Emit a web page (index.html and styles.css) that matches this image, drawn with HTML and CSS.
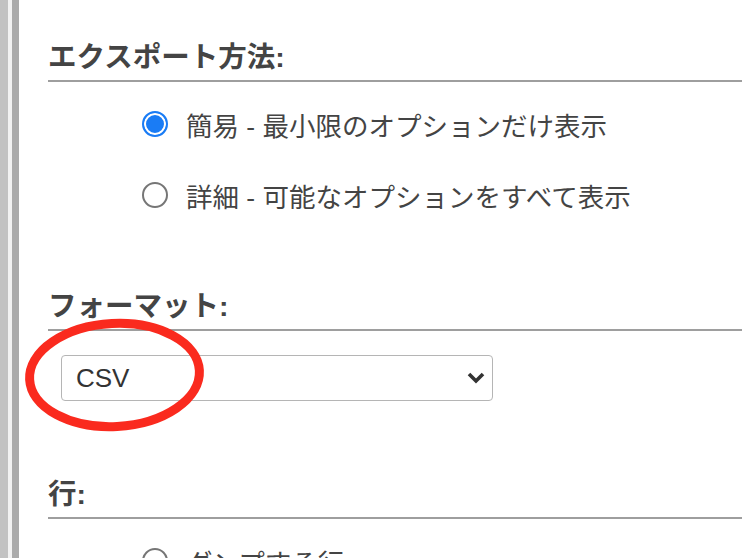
FILE: index.html
```html
<!DOCTYPE html>
<html lang="ja">
<head>
    <meta charset="UTF-8">
    <meta name="viewport" content="width=device-width, initial-scale=1.0">
    <title>エクスポート</title>
    <link rel="stylesheet" href="styles.css">
</head>
<body>
    <div class="page">
        <div class="edge"></div>
        <main class="content">
            <section class="group">
                <h3>エクスポート方法:</h3>
                <ul class="options">
                    <li><label><input type="radio" name="method" checked> 簡易 - 最小限のオプションだけ表示</label></li>
                    <li><label><input type="radio" name="method"> 詳細 - 可能なオプションをすべて表示</label></li>
                </ul>
            </section>

            <section class="group">
                <h3>フォーマット:</h3>
                <div class="select-wrap">
                    <select class="format-select">
                        <option>CSV</option>
                        <option>SQL</option>
                        <option>JSON</option>
                    </select>
                    <svg class="chevron" width="18" height="12" viewBox="0 0 18 12">
                        <path d="M2 2 L9 9 L16 2" fill="none" stroke="#333" stroke-width="3.6"/>
                    </svg>
                    <!-- red annotation circle -->
                    <svg class="mark" width="190" height="124" viewBox="0 0 190 124">
                        <ellipse cx="93.5" cy="60" rx="85" ry="51.5" fill="none" stroke="#fa2a1e" stroke-width="9" transform="rotate(-3 93.5 60)"/>
                    </svg>
                </div>
            </section>

            <section class="group">
                <h3>行:</h3>
                <ul class="options">
                    <li><label><input type="radio" name="rows"> ダンプする行</label></li>
                </ul>
            </section>
        </main>
    </div>
</body>
</html>
```

FILE: styles.css
```css
body {
    margin: 0;
    padding: 0;
    font-family: "Liberation Sans", "Noto Sans CJK JP", sans-serif;
    color: #444;
    background-color: #fff;
    overflow: hidden;
}

.page {
    display: flex;
    height: 558px;
}

.edge {
    flex: none;
    width: 20px;
    background: linear-gradient(to right, #c2c2c2 0 8px, #f2f2f2 8px 12px, #ababab 12px 19px, #fff 19px);
}

.content {
    flex: 1;
    padding: 40px 0 0 28px;
}

.group + .group {
    margin-top: 76px;
}

h3 {
    margin: 0;
    font-size: 28.5px;
    line-height: 35px;
    font-weight: bold;
    padding-bottom: 5px;
    border-bottom: 2px solid #9e9e9e;
}

.options {
    list-style-type: none;
    margin: 24px 0 0;
    padding: 0 0 0 94px;
    display: flex;
    flex-direction: column;
    gap: 35px;
}

.options label {
    display: flex;
    align-items: center;
    gap: 18px;
    height: 36px;
    font-size: 26.5px;
}

.options input[type="radio"] {
    appearance: none;
    box-sizing: border-box;
    width: 26px;
    height: 26px;
    margin: 0;
    border: 2px solid #767676;
    border-radius: 50%;
    background-color: #fff;
}

.options input[type="radio"]:checked {
    border: 2.5px solid #1a7cf5;
    background-color: #1a7cf5;
    box-shadow: inset 0 0 0 2px #fff;
}

.select-wrap {
    position: relative;
    width: 432px;
    height: 46px;
    margin: 24px 0 0 13px;
}

.format-select {
    appearance: none;
    box-sizing: border-box;
    width: 100%;
    height: 100%;
    padding: 0 0 0 14px;
    font-family: inherit;
    font-size: 26px;
    color: #333;
    background-color: #fff;
    border: 1px solid #b5b5b5;
    border-radius: 4px;
}

.chevron {
    position: absolute;
    left: 406px;
    top: 17px;
    pointer-events: none;
}

.mark {
    position: absolute;
    left: -40px;
    top: -40px;
    pointer-events: none;
}
```
